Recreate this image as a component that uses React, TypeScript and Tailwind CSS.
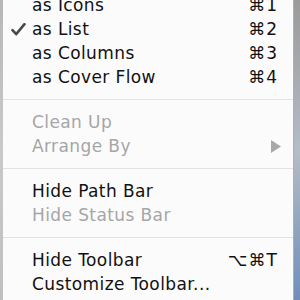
import React from 'react';

type Item =
  | { kind: 'sep' }
  | { kind: 'item'; label: string; shortcut?: string; checked?: boolean; disabled?: boolean; submenu?: boolean };

const items: Item[] = [
  { kind: 'item', label: 'as Icons', shortcut: '⌘1' },
  { kind: 'item', label: 'as List', shortcut: '⌘2', checked: true },
  { kind: 'item', label: 'as Columns', shortcut: '⌘3' },
  { kind: 'item', label: 'as Cover Flow', shortcut: '⌘4' },
  { kind: 'sep' },
  { kind: 'item', label: 'Clean Up', disabled: true },
  { kind: 'item', label: 'Arrange By', disabled: true, submenu: true },
  { kind: 'sep' },
  { kind: 'item', label: 'Hide Path Bar' },
  { kind: 'item', label: 'Hide Status Bar', disabled: true },
  { kind: 'sep' },
  { kind: 'item', label: 'Hide Toolbar', shortcut: '⌥⌘T' },
  { kind: 'item', label: 'Customize Toolbar...' },
];

const Check = () => (
  <svg width="15" height="13" viewBox="0 0 15 13" className="absolute left-[8px] top-[6px]">
    <path d="M1.5 7.2 L5.2 11.2 L13.5 1.2" fill="none" stroke="#4a4a4a" strokeWidth="2.6" strokeLinecap="round" strokeLinejoin="round" />
  </svg>
);

const App: React.FC = () => {
  return (
    <div className="w-[300px] h-[300px] overflow-hidden flex bg-[#d9dde3]">
      <div className="w-[3px] h-full bg-gradient-to-b from-[#b7b7b7] via-[#c9c9c9] to-[#bfbfbf]" />
      <div className="flex-1 h-full bg-[#fbfbfb] border-r border-[#b0b0b0] font-['DejaVu_Sans',sans-serif] text-[17px] tracking-[0.4px] text-[#111]">
        <div className="-mt-[7px] flex flex-col">
          {items.map((it, i) =>
            it.kind === 'sep' ? (
              <div key={i} className="h-[21px] flex items-center">
                <div className="w-full h-px bg-[#e2e2e2]" />
              </div>
            ) : (
              <div
                key={i}
                className={`relative h-6 flex items-center pl-[29px] pr-[15px] ${it.disabled ? 'text-[#a6a6a6]' : ''}`}
              >
                {it.checked && <Check />}
                <span className="leading-none">{it.label}</span>
                {it.shortcut && <span className="ml-auto leading-none tracking-[1px]">{it.shortcut}</span>}
                {it.submenu && (
                  <svg width="12" height="13" viewBox="0 0 12 13" className="ml-auto mr-[-4px]">
                    <path d="M1 0 L11 6.5 L1 13 Z" fill="#a9a9a9" />
                  </svg>
                )}
              </div>
            )
          )}
        </div>
      </div>
      <div className="w-[6px] h-full bg-gradient-to-b from-[#9a9a9a] via-[#b5bcc6] to-[#6f8fb8]" />
    </div>
  );
};

export default App;
